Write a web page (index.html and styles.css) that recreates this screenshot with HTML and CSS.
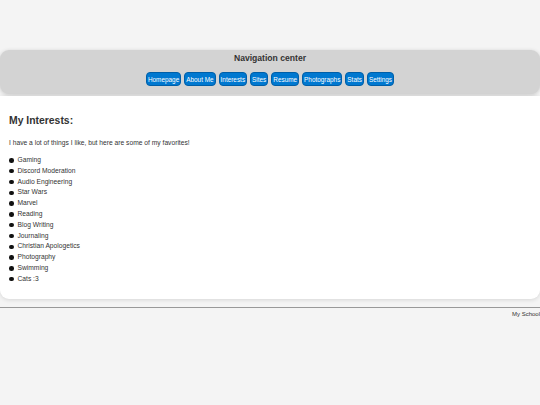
FILE: index.html
```html
<!DOCTYPE html>
<html>
<head>
<meta charset="utf-8">
<link rel="stylesheet" href="styles.css">
</head>
<body>
<div class="page">
  <nav class="nav">
    <div class="nav-title">Navigation center</div>
    <div class="nav-links">
      <a class="btn">Homepage</a>
      <a class="btn">About Me</a>
      <a class="btn">Interests</a>
      <a class="btn">Sites</a>
      <a class="btn">Resume</a>
      <a class="btn">Photographs</a>
      <a class="btn">Stats</a>
      <a class="btn">Settings</a>
    </div>
  </nav>
  <main class="card">
    <h1 class="heading">My Interests:</h1>
    <p class="intro">I have a lot of things I like, but here are some of my favorites!</p>
    <ul class="list">
      <li>Gaming</li>
      <li>Discord Moderation</li>
      <li>Audio Engineering</li>
      <li>Star Wars</li>
      <li>Marvel</li>
      <li>Reading</li>
      <li>Blog Writing</li>
      <li>Journaling</li>
      <li>Christian Apologetics</li>
      <li>Photography</li>
      <li>Swimming</li>
      <li>Cats :3</li>
    </ul>
  </main>
  <footer class="footer">My School</footer>
</div>
</body>
</html>
```
FILE: styles.css
```css
html, body {
  margin: 0;
  padding: 0;
  background: #f4f4f4;
  font-family: "Liberation Sans", Arial, sans-serif;
  color: #333;
}
.page {
  padding-top: 50px;
}
.nav {
  background: #d3d3d3;
  border-radius: 9px;
  box-shadow: 0 1px 4px rgba(0,0,0,0.18);
  padding: 2px 0 8px;
  text-align: center;
}
.nav-title {
  font-size: 8.6px;
  font-weight: bold;
  line-height: 12px;
  color: #333;
}
.nav-links {
  margin-top: 8px;
  display: flex;
  justify-content: center;
  gap: 3px;
}
.btn {
  display: block;
  background: #0078d0;
  color: #fff;
  font-size: 6.4px;
  line-height: 9px;
  padding: 1.5px 1px;
  border-radius: 4px;
  border: 0.5px solid #005fa8;
}
.card {
  margin-top: 2px;
  background: #fff;
  border-radius: 0 0 9px 9px;
  box-shadow: 0 1px 4px rgba(0,0,0,0.12);
  padding: 18px 9px 14px;
}
.heading {
  margin: 0;
  font-size: 10.4px;
  line-height: 14px;
  font-weight: bold;
  color: #333;
}
.intro {
  margin: 10px 0 0;
  font-size: 6.7px;
  line-height: 9px;
}
.list {
  margin: 8px 0 0;
  padding: 0;
  list-style: none;
  font-size: 6.7px;
  line-height: 10.8px;
}
.list li {
  display: flex;
  align-items: center;
}
.list li::before {
  content: "";
  width: 4.5px;
  height: 4.5px;
  border-radius: 50%;
  background: #111;
  margin: 0 4px 0 0;
}
.footer {
  margin-top: 8px;
  border-top: 1px solid #999;
  text-align: right;
  font-size: 6px;
  line-height: 10px;
  padding-top: 1px;
  color: #333;
}
```
